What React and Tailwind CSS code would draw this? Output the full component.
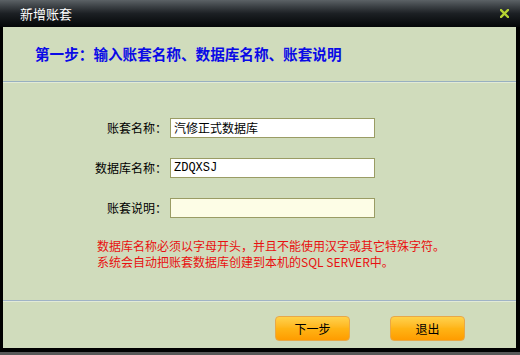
import React from 'react';

const cjk = { fontFamily: '"Noto Sans CJK SC", "Liberation Sans", sans-serif' };

const Field = ({ label, value, bg = 'bg-white', mono = false }) => (
  <div className="flex items-center h-[20px]">
    <div className="w-[164px] text-right text-[12px] text-black leading-none">{label}</div>
    <div
      className={`ml-[3px] w-[205px] h-[20px] border border-[#9a9c64] ${bg} flex items-center pl-[3px] text-[12px] text-black leading-none`}
      style={mono ? { fontFamily: '"Liberation Mono", "Noto Sans CJK SC", monospace' } : undefined}
    >
      {value}
    </div>
  </div>
);

const OrangeButton = ({ children }) => (
  <button
    type="button"
    className="w-[75px] h-[25px] rounded-[4px] border border-[#e8a848] bg-gradient-to-b from-[#ffd24a] via-[#ffb414] to-[#ff9c00] text-[12px] text-black leading-none flex items-center justify-center"
  >
    {children}
  </button>
);

export default function App() {
  return (
    <div className="w-[520px] h-[355px] bg-black flex flex-col overflow-hidden" style={cjk}>
      {/* title bar */}
      <div className="h-[27px] flex items-center justify-between bg-gradient-to-b from-[#5c6266] via-[#1c2024] to-[#050708] pl-[20px] pr-[11px]">
        <span className="text-white text-[13px] leading-none">新增账套</span>
        <svg width="9" height="9" viewBox="0 0 9 9">
          <path d="M1 1L8 8M8 1L1 8" stroke="#b4d232" strokeWidth="2.4" strokeLinecap="square" />
        </svg>
      </div>

      {/* body */}
      <div className="ml-[3px] mr-[4px] h-[321px] bg-[#d0dcbc] flex flex-col">
        <div className="h-[54px] flex items-center pl-[32px]">
          <span className="text-[14.6px] font-bold text-[#0a0ae6] leading-none">第一步：输入账套名称、数据库名称、账套说明</span>
        </div>
        <div className="h-px bg-[#98b0c0]" />
        <div className="h-px bg-[#e2ead6]" />

        <div className="mt-[35px] flex flex-col gap-[20px]">
          <Field label="账套名称：" value="汽修正式数据库" />
          <Field label="数据库名称：" value="ZDQXSJ" mono />
          <Field label="账套说明：" value="" bg="bg-[#fdfde6]" />
        </div>

        <div className="mt-[20px] pl-[94px] text-[12px] leading-[16px] text-[#e81010]">
          <div>数据库名称必须以字母开头，并且不能使用汉字或其它特殊字符。</div>
          <div>系统会自动把账套数据库创建到本机的SQL SERVER中。</div>
        </div>

        <div className="mt-[30px] h-px bg-[#a0b4c6]" />
        <div className="h-px bg-[#e2ead6]" />

        <div className="mt-[14px] flex pl-[272px] gap-[40px]">
          <OrangeButton>下一步</OrangeButton>
          <OrangeButton>退出</OrangeButton>
        </div>
      </div>

      <div className="h-[4px] bg-black" />
      <div className="flex-1 bg-[#585858]" />
    </div>
  );
}
